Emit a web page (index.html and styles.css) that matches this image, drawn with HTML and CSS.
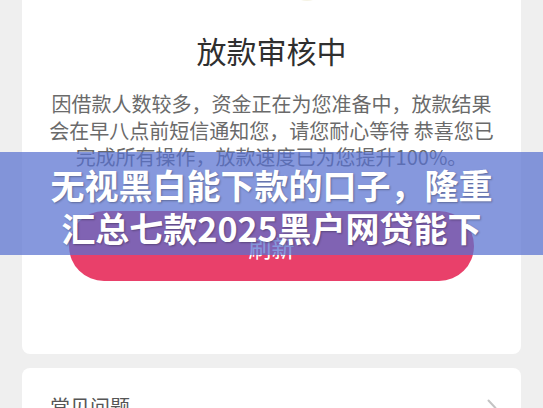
FILE: index.html
```html
<!DOCTYPE html>
<html lang="zh-CN">
<head>
  <meta charset="UTF-8" />
  <meta name="viewport" content="width=device-width, initial-scale=1.0" />
  <title>放款审核中</title>
  <link rel="stylesheet" href="styles.css">
</head>
<body>
  <main class="page">
    <section class="card status">
      <div class="status-icon"></div>
      <h1 class="status-title">放款审核中</h1>
      <p class="status-text">因借款人数较多，资金正在为您准备中，放款结果会在早八点前短信通知您，请您耐心等待 恭喜您已完成所有操作，放款速度已为您提升100%。</p>
      <button class="refresh-btn">刷新</button>
    </section>

    <section class="card faq">
      <span class="faq-title">常见问题</span>
      <svg class="chevron" width="10" height="18" viewBox="0 0 10 18">
        <path d="M1.5 1.5 L8.5 9 L1.5 16.5" fill="none" stroke="#c4c4c4" stroke-width="2" stroke-linecap="round" stroke-linejoin="round"/>
      </svg>
    </section>
  </main>

  <div class="banner">
    <p>无视黑白能下款的口子，隆重<br>汇总七款2025黑户网贷能下</p>
  </div>
</body>
</html>
```

FILE: styles.css
```css
body {
  font-family: "Noto Sans CJK SC", "Noto Sans", sans-serif;
  margin: 0;
  padding: 0;
  background: #efefef;
  overflow: hidden;
}
.page {
  padding: 0 22px;
  margin-top: -60px;
}
.card {
  background: #fff;
  border-radius: 8px;
}
.status {
  padding: 0 26px 73px;
  text-align: center;
}
.status-icon {
  width: 38px;
  height: 38px;
  border-radius: 50%;
  background: #f5f3e4;
  margin: 23px 0 0 calc(50% + 16px);
}
.status-title {
  margin: 29px 0 0;
  font-size: 30px;
  line-height: 40px;
  font-weight: normal;
  color: #2f2f2f;
}
.status-text {
  margin: 21px 0 0;
  font-size: 20px;
  line-height: 26.5px;
  color: #6a6a6a;
}
.refresh-btn {
  display: block;
  width: 405px;
  height: 70px;
  margin: 40px auto 0;
  padding: 3px 0 0;
  border: none;
  border-radius: 35px;
  background: #e9406a;
  color: #fff;
  font-family: inherit;
  font-size: 23px;
}
.faq {
  margin-top: 14px;
  height: 120px;
  padding: 25px 24px 0 28px;
  display: flex;
  justify-content: space-between;
  align-items: flex-start;
  box-sizing: border-box;
}
.faq-title {
  font-size: 20px;
  line-height: 28px;
  color: #555;
}
.chevron {
  margin-top: 6px;
}
.banner {
  position: absolute;
  top: 152px;
  left: 0;
  right: 0;
  height: 103px;
  background: rgba(88, 112, 208, 0.72);
  text-align: center;
}
.banner p {
  margin: 0;
  padding-top: 11px;
  font-size: 34px;
  line-height: 43px;
  font-weight: bold;
  color: #fff;
  text-shadow: 1px 1px 2px rgba(0, 0, 0, 0.3);
}
```
